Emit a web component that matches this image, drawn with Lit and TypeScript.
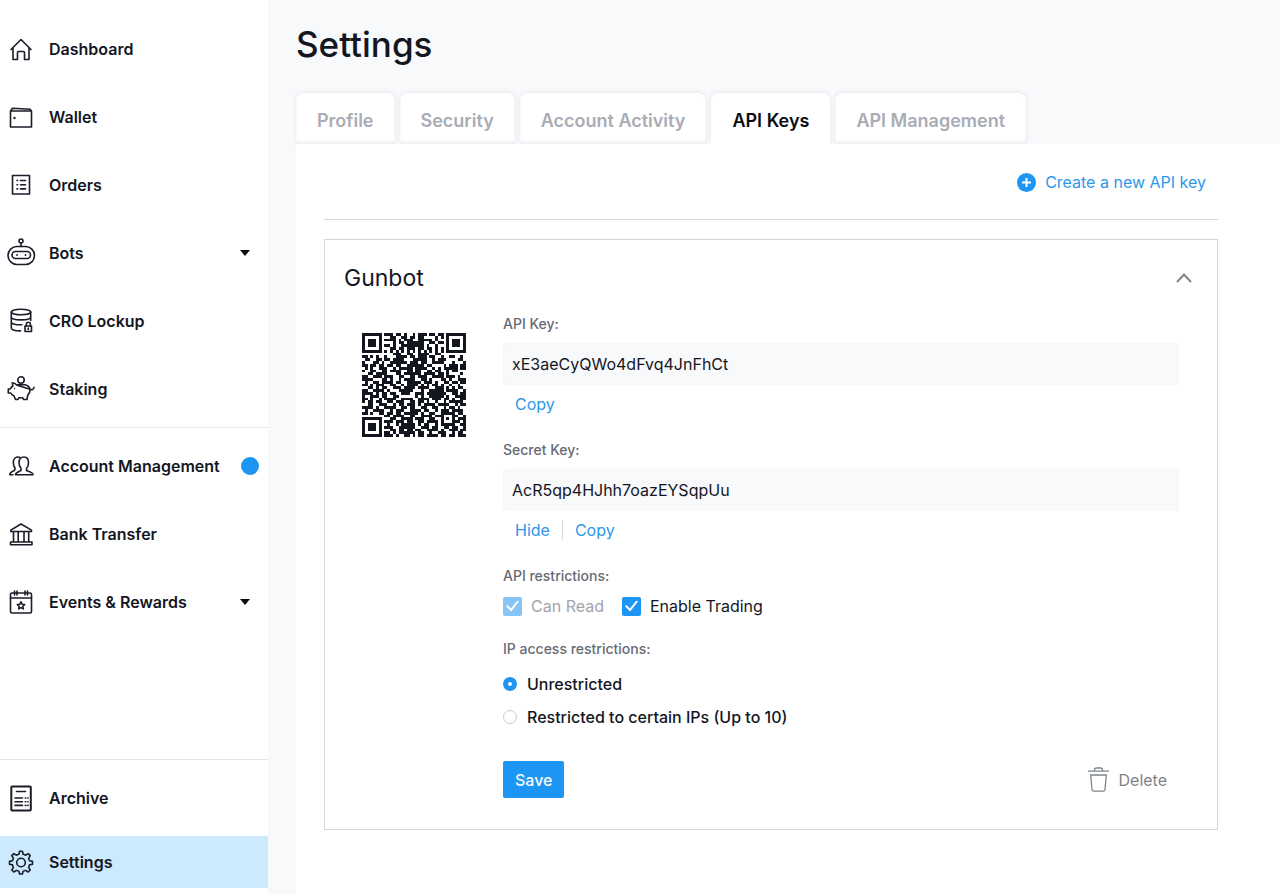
import { LitElement, html, css, svg, nothing } from "lit";
import { customElement, property, state } from "lit/decorators.js";
import { classMap } from "lit/directives/class-map.js";

const ICONS: Record<string, unknown> = {
  dashboard: svg`<path d="M4 14.500 14 4.500l10 10M6 13v11.500h4.500V17.500q0-1 1-1h5q1 0 1 1v7H22V13" />`,
  wallet: svg`<path d="M3.500 8h21v16h-21zM3.500 8 5.500 5.300l17.500 1 1.500 1.700" /><circle cx="7.500" cy="15" r="1.200" class="solid" />`,
  orders: svg`<path d="M5.500 4.500h17V23h-17z" /><path d="M10 9.500h.6M10 13.700h.6M10 17.900h.6M13.500 9.500h5M13.500 13.700h5M13.500 17.900h5" />`,
  bots: svg`<rect x="1" y="7.500" width="26.500" height="18" rx="9" /><rect x="5" y="12.500" width="18.500" height="7" rx="3.500" /><circle cx="14" cy="2" r="2" /><path d="M14 4v3.500" /><circle cx="10" cy="16" r=".9" class="solid" /><circle cx="18.500" cy="16" r=".9" class="solid" />`,
  lockup: svg`<ellipse cx="14" cy="5" rx="9.700" ry="2.800" /><path d="M4.300 5v16c0 1.700 4 2.800 9.200 2.900M23.700 5v8.500M4.300 10c0 3.800 19.400 3.800 19.400 0M4.300 15c0 2 4.500 2.900 10.500 2.800" /><rect x="18" y="19" width="6.500" height="5.500" /><path d="M19.300 19v-1.800a2 2 0 0 1 4 0V19M21.300 21v1.500" />`,
  staking: svg`<circle cx="14" cy="5" r="3.200" /><path d="M10.500 9.800h7.500M18 9.800c3 .7 4.600 2.400 5.100 4.500 1.600 1 3.700.3 3.900-2M23.100 14.300c.2 2.700-1 4.400-2.300 5.800l-.8 4.400h-3.500l-.7-1.700h-4L11 24.500H8.500l-1.500-3.500c-1.500-.9-2.700-1.800-3.300-3H1.300v-4h2c.6-1.400 1.500-2.300 2.500-3L5.300 7.700c1.700 0 3.300.8 4.200 2.200z" /><circle cx="7.500" cy="13.500" r=".7" class="solid" />`,
  account: svg`<path d="M17 5c-3 0-5 2.200-5 5.500 0 2.700.8 4.500 2 6v2c-2 1-5.500 1.500-5.500 4.300h17.500c0-2.800-4.500-3.300-6.500-4.300v-2c1.300-1.500 2-3.300 2-6C21.500 7.200 20 5 17 5z" /><path d="M12.500 5.300C9 4.200 6.300 6.500 6.300 10.500c0 2.500.6 4 1.700 5.500v1.500c-.5 2-5.300 1.700-5.300 5.300H6" />`,
  bank: svg`<path d="M3.800 11.500h20.700v-1.400L14 4 3.800 10.100zM6.500 11.500V22M11.200 11.500V22M17 11.500V22M21.700 11.500V22M3.500 22h21.500v2.700H3.500z" />`,
  events: svg`<rect x="3.500" y="5" width="21" height="20" rx="1.500" /><path d="M3.500 10h21M7.500 3v4M10 3v4M18 3v4M20.500 3v4" /><path d="m14 13.800 1.100 2.400 2.600.3-1.900 1.800.5 2.600-2.300-1.300-2.300 1.300.5-2.600-1.900-1.800 2.600-.3z" />`,
  archive: svg`<rect x="4.300" y="2.500" width="19.500" height="24" rx=".8" stroke-width="2" /><path d="M9.500 7.500h9M8 14h7.500M8 17.700h7.500M8 21.400h7.500M18.300 14h.5M18.300 17.700h.5M18.300 21.400h.5M20.800 14h.3M20.800 17.700h.3M20.800 21.400h.3" />`,
  settings: svg`<circle cx="14" cy="14.500" r="4.300" /><path d="M12.600 3.300h2.800l.7 3c.9.200 1.700.5 2.400.9l2.700-1.600 2 2-1.600 2.700c.4.700.7 1.500.9 2.400l3 .7v2.800l-3 .7c-.2.900-.5 1.700-.9 2.400l1.600 2.700-2 2-2.700-1.600c-.7.4-1.500.7-2.400.9l-.7 2.700h-2.800l-.7-2.700c-.9-.2-1.700-.5-2.400-.9L6.800 24l-2-2 1.600-2.700c-.4-.7-.7-1.500-.9-2.400l-3-.7v-2.800l3-.7c.2-.9.500-1.700.9-2.400L4.800 7.600l2-2 2.700 1.600c.7-.4 1.500-.7 2.400-.9z" />`,
};

const QR_ROWS = [
  "........###.##.#..#.###.##.###.......",
  "..........##..##.##.##....#.#........",
  "........####.#.###..#####.#..........",
  "...........#.##.######..##.##........",
  "........##.#..########.#..#..........",
  "..........##.##.###.##.##.#.#........",
  "........#.#.#.#.#.#.#.#.#.#.#........",
  "...........###..##..####..##.........",
  "##.#.#..#...####.##.###.##..#..##..#.",
  ".##..##.##.####...#####..#.###....##.",
  "#...##.#..######.###.##..####...#...#",
  "##.##.##.##.##..######.##....#.###.##",
  ".#.#..###..#.#####.####..#.#.#####.##",
  "#..##..##.####..##.##..##.##..#.##...",
  "..##.####...##.######.####.##.#....#.",
  "##..###.###..##..##.###..####.###.#..",
  "####...##.#..#.####..##.#...##.#..###",
  ".#..##.####.##..#####.###.#..##.##.##",
  "##.#.###..##..#.####.#.#.##.#..#..#..",
  "..##.#.##..###.####.####..###.#.#.##.",
  "##..####.#...#####...#..#####.####..#",
  "####.#.##.##..###..###.#######..##.##",
  "#..###.##..##......#.#..#####.#..####",
  "##.#..#.####..####..####.###.##.#..##",
  "#.##.##..##.###..##.##.#..#..#.#####.",
  "..##..###..#.##.###.#.####.####..#.##",
  "####.#..####..##.##..##..##..#.##.#..",
  ".#..####..#.###..####.##..#.###.####.",
  "##.#..##.##.##.#####.#..##..#####.##.",
  "........##.####..##..####.###...##..#",
  "..........##..####.###..##..#.#.#.###",
  "........###.###.##..##.####.#...###.#",
  ".........#..#.#####.#.##..#.#####..##",
  "........###..######..###.##..##.##..#",
  "..........##.##.##.##..####.#..###.##",
  "........##.#.######.##..#..###..#.##.",
  "........###.#..##.#.##.####.##.##.###",
];

function qrPath(): string {
  const n = QR_ROWS.length;
  const ring = (x: number, y: number, cx: number, cy: number) =>
    Math.max(Math.abs(x - cx), Math.abs(y - cy));
  let d = "";
  for (let y = 0; y < n; y++) {
    for (let x = 0; x < n; x++) {
      const finder = Math.min(ring(x, y, 3, 3), ring(x, y, n - 4, 3), ring(x, y, 3, n - 4));
      const dark = finder <= 3 ? finder !== 2 : finder > 4 && QR_ROWS[y][x] === "#";
      if (dark) d += `M${x} ${y}h1v1h-1z`;
    }
  }
  return d;
}

@customElement("nav-item")
class NavItem extends LitElement {
  @property() icon = "";
  @property() label = "";
  @property({ type: Boolean }) active = false;
  @property({ type: Boolean }) expandable = false;
  @property({ type: Boolean }) notice = false;

  static styles = css`
    :host { display: block; }
    .link {
      display: flex;
      align-items: center;
      gap: 14px;
      height: 52px;
      padding: 0 9px 0 7px;
      color: #14161f;
      font-size: 16px;
      font-weight: 600;
      text-decoration: none;
    }
    .active { background: #cde9fd; }
    .icon {
      flex: none;
      width: 28px;
      height: 28px;
      overflow: visible;
      fill: none;
      stroke: #1b1d28;
      stroke-width: 1.6;
      stroke-linejoin: round;
      stroke-linecap: round;
    }
    .solid { fill: #1b1d28; stroke: none; }
    .label { flex: 1; white-space: nowrap; }
    .caret { width: 10px; height: 6px; margin-right: 9px; fill: #0b0c12; }
    .dot { width: 18px; height: 18px; border-radius: 50%; background: #1d96f3; }
  `;

  render() {
    return html`<a class=${classMap({ link: true, active: this.active })} href="#">
      <svg class="icon" viewBox="0 0 28 28" aria-hidden="true">${ICONS[this.icon]}</svg>
      <span class="label">${this.label}</span>
      ${this.expandable
        ? html`<svg class="caret" viewBox="0 0 10 6" aria-hidden="true"><path d="M0 0h10L5 6z" /></svg>`
        : nothing}
      ${this.notice ? html`<span class="dot"></span>` : nothing}
    </a>`;
  }
}

@customElement("app-root")
class AppRoot extends LitElement {
  @state() private tab = "API Keys";

  static styles = css`
    :host {
      display: block;
      font-family: Inter, "Liberation Sans", sans-serif;
      color: #14161f;
    }
    * { box-sizing: border-box; }
    button, input { font: inherit; color: inherit; margin: 0; }
    button { border: 0; padding: 0; background: none; cursor: pointer; }
    a { text-decoration: none; }
    h1, h2, fieldset, legend { margin: 0; padding: 0; border: 0; }

    .layout {
      display: grid;
      grid-template-columns: 269px minmax(0, 1fr);
      min-height: 100vh;
      background: #f7f9fb;
    }
    .sidebar {
      display: flex;
      flex-direction: column;
      background: #fff;
      border-right: 1px solid #f4f6f9;
    }
    .group { display: grid; gap: 16px; padding: 12px 0; }
    .first { padding-top: 23px; }
    .middle { border-top: 1px solid #e6e8ec; }
    .last {
      gap: 12px;
      margin-top: auto;
      padding-bottom: 6px;
      border-top: 1px solid #e2e4e9;
    }

    .main { display: flex; flex-direction: column; padding-left: 27px; }
    .title {
      padding: 20px 0 24px;
      font-size: 35px;
      line-height: 49px;
      font-weight: 500;
    }
    .tabs { display: flex; gap: 5px; }
    .tab {
      height: 51px;
      padding: 3px 21px 0;
      border-radius: 8px 8px 0 0;
      background: #fff;
      box-shadow: 0 -1px 4px rgba(30, 40, 70, 0.09), inset 0 -3px 3px #eff1f4;
      color: #a9acb5;
      font-size: 18px;
      font-weight: 600;
      white-space: nowrap;
    }
    .selected { box-shadow: 0 -1px 4px rgba(30, 40, 70, 0.09); color: #0b0c12; }

    .panel {
      position: relative;
      flex: 1;
      padding: 20px 62px 64px 28px;
      background: #fff;
    }
    .toolbar {
      display: flex;
      justify-content: flex-end;
      padding: 8px 12px 27px 0;
      border-bottom: 1px solid #d3d5db;
    }
    .create { display: flex; align-items: center; gap: 9px; height: 20px; }
    .link { color: #2d97ea; font-size: 16px; line-height: 20px; }
    .plus { width: 19px; height: 19px; }

    .card {
      margin-top: 19px;
      padding: 20px 38px 31px 19px;
      border: 1px solid #d3d5db;
    }
    .card-head { display: flex; align-items: center; justify-content: space-between; height: 36px; }
    .name { font-size: 23px; line-height: 36px; font-weight: 400; }
    .toggle { display: flex; margin-right: -13px; }
    .chevron { width: 16px; height: 10px; }
    .body { display: grid; grid-template-columns: 104px minmax(0, 1fr); gap: 37px; padding: 18px 0 0 18px; }
    .qr { width: 104px; height: 104px; margin-top: 19px; fill: #14161f; }
    .form { display: grid; }

    .caption { display: block; color: #676a75; font-size: 14px; line-height: 20px; font-weight: 500; }
    .field { margin-bottom: 26px; }
    .key {
      display: block;
      width: 100%;
      height: 42px;
      margin: 9px 0;
      padding: 0 8px;
      border: 1px solid #f5f7f9;
      border-radius: 3px;
      background: #f8f9fb;
      font-size: 16px;
    }
    .actions { display: flex; padding-left: 12px; }
    .actions .link + .link { margin-left: 12px; padding-left: 12px; border-left: 1px solid #d3dbe4; }

    .checks { display: flex; gap: 18px; margin-top: 10px; }
    .option { display: flex; align-items: center; font-size: 16px; line-height: 20px; }
    .check {
      display: grid;
      place-items: center;
      appearance: none;
      width: 19px;
      height: 19px;
      margin-right: 9px;
      border-radius: 2px;
      background: #1d96f3;
    }
    .check:checked::before {
      content: "";
      width: 13px;
      height: 11px;
      background: #fff;
      clip-path: polygon(0 52%, 12% 40%, 38% 72%, 88% 0, 100% 10%, 40% 100%);
    }
    .muted { color: #a1a4ad; }
    .muted .check { background: #86c5f6; }
    .ip { margin-top: 23px; }
    .radios { display: grid; gap: 13px; margin-top: 15px; font-weight: 500; }
    .radio {
      appearance: none;
      width: 14px;
      height: 14px;
      margin-right: 10px;
      border: 1px solid #c9ccd3;
      border-radius: 50%;
      background: #fff;
    }
    .radio:checked { border: 5px solid #1d96f3; }

    .foot { display: flex; justify-content: space-between; align-items: center; margin-top: 34px; padding-right: 12px; }
    .save {
      height: 37px;
      padding: 0 12px;
      border-radius: 2px;
      background: #1d96f3;
      color: #f2f9ff;
      font-size: 16px;
      font-weight: 500;
    }
    .delete { display: flex; align-items: center; gap: 10px; color: #80838e; font-size: 16px; }
    .trash { width: 21px; height: 25px; fill: none; stroke: #80838e; stroke-width: 1.3; }
  `;

  private renderTab(name: string) {
    const selected = name === this.tab;
    return html`<button
      class=${classMap({ tab: true, selected })}
      role="tab"
      aria-selected=${selected ? "true" : "false"}
      @click=${() => (this.tab = name)}
    >${name}</button>`;
  }

  render() {
    return html`
      <div class="layout">
        <nav class="sidebar">
          <div class="group first">
            <nav-item icon="dashboard" label="Dashboard"></nav-item>
            <nav-item icon="wallet" label="Wallet"></nav-item>
            <nav-item icon="orders" label="Orders"></nav-item>
            <nav-item icon="bots" label="Bots" expandable></nav-item>
            <nav-item icon="lockup" label="CRO Lockup"></nav-item>
            <nav-item icon="staking" label="Staking"></nav-item>
          </div>
          <div class="group middle">
            <nav-item icon="account" label="Account Management" notice></nav-item>
            <nav-item icon="bank" label="Bank Transfer"></nav-item>
            <nav-item icon="events" label="Events &amp; Rewards" expandable></nav-item>
          </div>
          <div class="group last">
            <nav-item icon="archive" label="Archive"></nav-item>
            <nav-item icon="settings" label="Settings" active></nav-item>
          </div>
        </nav>

        <main class="main">
          <h1 class="title">Settings</h1>
          <div class="tabs" role="tablist">
            ${["Profile", "Security", "Account Activity", "API Keys", "API Management"].map((t) => this.renderTab(t))}
          </div>
          <section class="panel">
            <div class="toolbar">
              <a class="link create" href="#">
                <svg class="plus" viewBox="0 0 19 19" aria-hidden="true">
                  <circle cx="9.500" cy="9.500" r="9.500" fill="#1d96f3" />
                  <path d="M9.500 5v9M5 9.500h9" stroke="#fff" stroke-width="2" />
                </svg>
                Create a new API key
              </a>
            </div>

            <article class="card">
              <div class="card-head">
                <h2 class="name">Gunbot</h2>
                <button class="toggle" aria-label="Collapse">
                  <svg class="chevron" viewBox="0 0 16 10"><path d="m1 9 7-7.500L15 9" fill="none" stroke="#80838e" stroke-width="2" /></svg>
                </button>
              </div>
              <div class="body">
                <svg class="qr" viewBox="0 0 37 37" shape-rendering="crispEdges" role="img"><path d=${qrPath()} /></svg>
                <form class="form" @submit=${(e: Event) => e.preventDefault()}>
                  <div class="field">
                    <label class="caption" for="api">API Key:</label>
                    <input class="key" id="api" type="text" readonly value="xE3aeCyQWo4dFvq4JnFhCt" />
                    <div class="actions"><button type="button" class="link">Copy</button></div>
                  </div>
                  <div class="field">
                    <label class="caption" for="secret">Secret Key:</label>
                    <input class="key" id="secret" type="text" readonly value="AcR5qp4HJhh7oazEYSqpUu" />
                    <div class="actions">
                      <button type="button" class="link">Hide</button>
                      <button type="button" class="link">Copy</button>
                    </div>
                  </div>
                  <fieldset>
                    <legend class="caption">API restrictions:</legend>
                    <div class="checks">
                      <label class="option muted"><input class="check" type="checkbox" checked disabled />Can Read</label>
                      <label class="option"><input class="check" type="checkbox" checked />Enable Trading</label>
                    </div>
                  </fieldset>
                  <fieldset class="ip">
                    <legend class="caption">IP access restrictions:</legend>
                    <div class="radios">
                      <label class="option"><input class="radio" type="radio" name="ip" checked />Unrestricted</label>
                      <label class="option"><input class="radio" type="radio" name="ip" />Restricted to certain IPs (Up to 10)</label>
                    </div>
                  </fieldset>
                  <div class="foot">
                    <button class="save" type="submit">Save</button>
                    <button class="delete" type="button">
                      <svg class="trash" viewBox="0 0 21 25" aria-hidden="true">
                        <path d="M0 4.200h21M6.500 4V3a2 2 0 0 1 2-2h4a2 2 0 0 1 2 2v1M2.700 8h15.600L17 22.500c-.1 1-.8 1.700-1.800 1.700H5.800c-1 0-1.700-.7-1.800-1.700z" />
                      </svg>
                      Delete
                    </button>
                  </div>
                </form>
              </div>
            </article>
          </section>
        </main>
      </div>
    `;
  }
}
